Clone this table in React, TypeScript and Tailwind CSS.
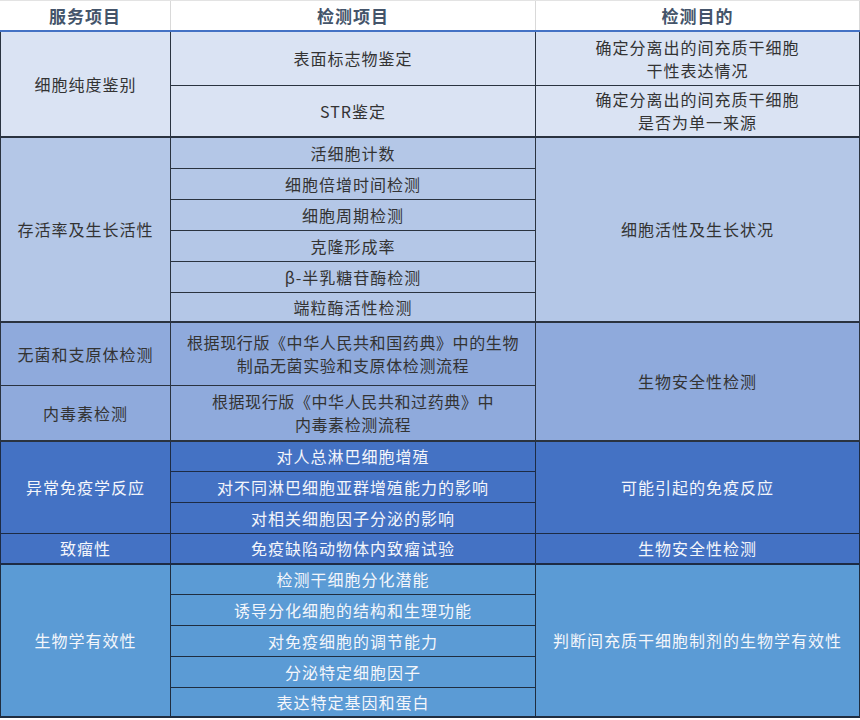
type Cell = { text: string[]; span: number; tight?: boolean };

type Section = {
  bg: string;
  fg: string;
  line: string;
  rows: number[];
  cols: [Cell[], Cell[], Cell[]];
};

const sections: Section[] = [
  {
    bg: "bg-[#dae3f3]",
    fg: "text-[#333333]",
    line: "border-[#2a3340]",
    rows: [54, 50],
    cols: [
      [{ text: ["细胞纯度鉴别"], span: 2 }],
      [
        { text: ["表面标志物鉴定"], span: 1 },
        { text: ["STR鉴定"], span: 1 },
      ],
      [
        { text: ["确定分离出的间充质干细胞", "干性表达情况"], span: 1 },
        { text: ["确定分离出的间充质干细胞", "是否为单一来源"], span: 1 },
      ],
    ],
  },
  {
    bg: "bg-[#b4c7e7]",
    fg: "text-[#333333]",
    line: "border-[#2a3340]",
    rows: [31, 31, 31, 31, 31, 28],
    cols: [
      [{ text: ["存活率及生长活性"], span: 6 }],
      [
        { text: ["活细胞计数"], span: 1 },
        { text: ["细胞倍增时间检测"], span: 1 },
        { text: ["细胞周期检测"], span: 1 },
        { text: ["克隆形成率"], span: 1 },
        { text: ["β-半乳糖苷酶检测"], span: 1 },
        { text: ["端粒酶活性检测"], span: 1 },
      ],
      [{ text: ["细胞活性及生长状况"], span: 6 }],
    ],
  },
  {
    bg: "bg-[#8faadc]",
    fg: "text-[#333333]",
    line: "border-[#2a3340]",
    rows: [63, 54],
    cols: [
      [
        { text: ["无菌和支原体检测"], span: 1 },
        { text: ["内毒素检测"], span: 1 },
      ],
      [
        {
          text: ["根据现行版《中华人民共和国药典》中的生物", "制品无菌实验和支原体检测流程"],
          span: 1,
          tight: true,
        },
        {
          text: ["根据现行版《中华人民共和过药典》中", "内毒素检测流程"],
          span: 1,
          tight: true,
        },
      ],
      [{ text: ["生物安全性检测"], span: 2 }],
    ],
  },
  {
    bg: "bg-[#4472c4]",
    fg: "text-[#f4f6fb]",
    line: "border-[#1d2b44]",
    rows: [30, 31, 31, 29],
    cols: [
      [
        { text: ["异常免疫学反应"], span: 3 },
        { text: ["致瘤性"], span: 1 },
      ],
      [
        { text: ["对人总淋巴细胞增殖"], span: 1 },
        { text: ["对不同淋巴细胞亚群增殖能力的影响"], span: 1 },
        { text: ["对相关细胞因子分泌的影响"], span: 1 },
        { text: ["免疫缺陷动物体内致瘤试验"], span: 1 },
      ],
      [
        { text: ["可能引起的免疫反应"], span: 3 },
        { text: ["生物安全性检测"], span: 1 },
      ],
    ],
  },
  {
    bg: "bg-[#5b9bd5]",
    fg: "text-[#f4f6fb]",
    line: "border-[#1f2d40]",
    rows: [30, 31, 31, 31, 28],
    cols: [
      [{ text: ["生物学有效性"], span: 5 }],
      [
        { text: ["检测干细胞分化潜能"], span: 1 },
        { text: ["诱导分化细胞的结构和生理功能"], span: 1 },
        { text: ["对免疫细胞的调节能力"], span: 1 },
        { text: ["分泌特定细胞因子"], span: 1 },
        { text: ["表达特定基因和蛋白"], span: 1 },
      ],
      [{ text: ["判断间充质干细胞制剂的生物学有效性"], span: 5 }],
    ],
  },
];

const widths = ["w-[170px]", "w-[365px]", "w-[324px]"];

function Column({ cells, rows, width, line }: { cells: Cell[]; rows: number[]; width: string; line: string }) {
  let at = 0;
  return (
    <div className={`flex flex-col border-r ${line} ${width}`}>
      {cells.map((c, i) => {
        const h = rows.slice(at, at + c.span).reduce((a, b) => a + b, 0);
        at += c.span;
        const last = i === cells.length - 1;
        return (
          <div
            key={i}
            style={{ height: h }}
            className={`box-border flex flex-col items-center justify-center whitespace-nowrap text-center leading-[23px] ${
              c.tight ? "tracking-[0.6px]" : "tracking-[1px]"
            } ${last ? "" : `border-b ${line}`}`}
          >
            {c.text.map((t) => (
              <span key={t}>{t}</span>
            ))}
          </div>
        );
      })}
    </div>
  );
}

export default function App() {
  return (
    <div className="min-h-[720px] w-[860px] bg-white font-['Noto_Sans_CJK_SC',sans-serif] text-[16px]">
      <div className="box-border flex h-[32px] border-t border-b-2 border-t-[#e3e3e3] border-b-[#4472c4] bg-white text-[17px] font-bold tracking-[1px] text-[#44546a]">
        <div className="flex w-[171px] items-center justify-center border-r border-[#d9d9d9]">服务项目</div>
        <div className="flex w-[365px] items-center justify-center border-r border-[#d9d9d9]">检测项目</div>
        <div className="flex w-[324px] items-center justify-center border-r border-[#d9d9d9]">检测目的</div>
      </div>
      <div className="flex flex-col">
        {sections.map((s, i) => {
          const total = s.rows.reduce((a, b) => a + b, 0) + 2;
          return (
            <div
              key={i}
              style={{ height: total }}
              className={`box-border flex border-b-2 border-l ${s.line} ${s.bg} ${s.fg}`}
            >
              {s.cols.map((cells, j) => (
                <Column key={j} cells={cells} rows={s.rows} width={widths[j]} line={s.line} />
              ))}
            </div>
          );
        })}
      </div>
    </div>
  );
}
